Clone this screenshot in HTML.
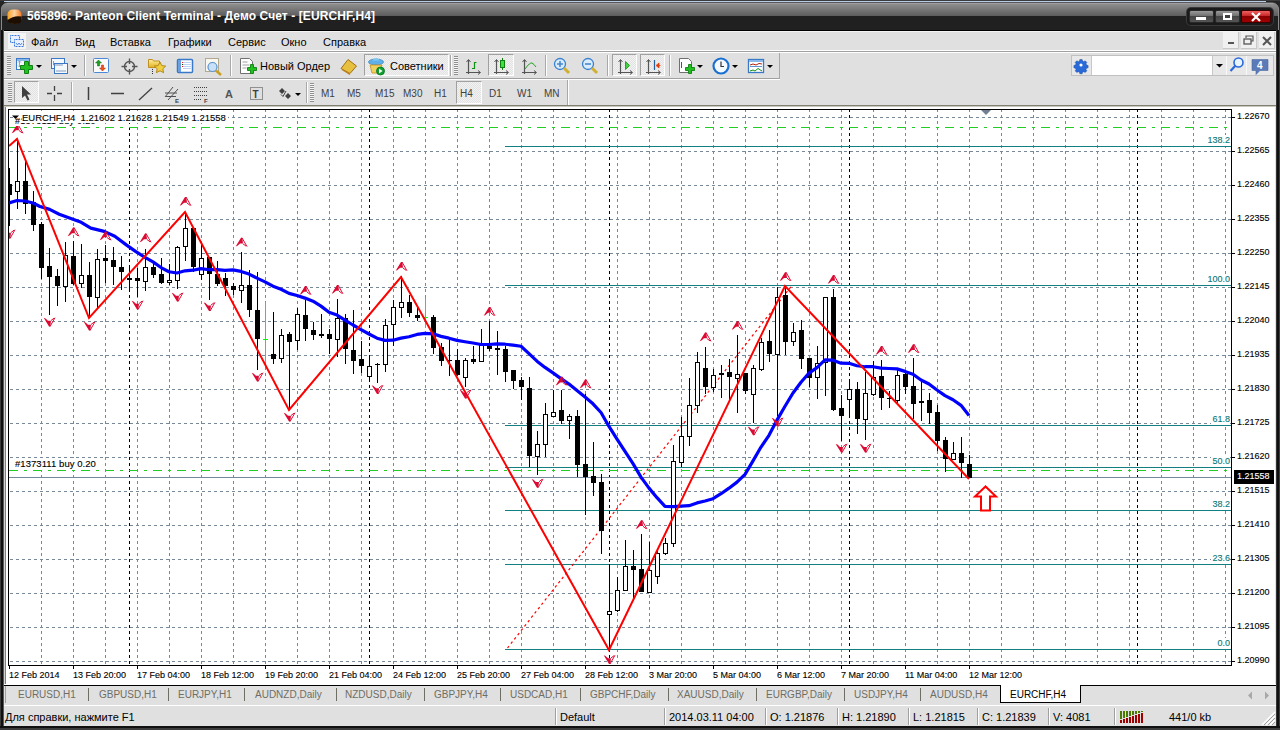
<!DOCTYPE html>
<html><head><meta charset="utf-8">
<style>
*{margin:0;padding:0;box-sizing:border-box}
html,body{width:1280px;height:730px;overflow:hidden;background:#e0e0e0;font-family:"Liberation Sans",sans-serif;font-size:11px;color:#000;position:relative}
.abs{position:absolute}
.t{position:absolute;white-space:nowrap;line-height:1}
.ct{position:absolute;white-space:nowrap;font-size:9px;line-height:11px;color:#000;-webkit-text-stroke:0.12px currentColor}
.fl{color:#087878;background:#fff;padding-left:1px}
#title{left:0;top:0;width:1280px;height:31px;background:linear-gradient(#3c3c3c 0,#3c3c3c 1px,#b8cce8 1px,#b8cce8 2px,#303030 2px,#303030 3px,#b4b4b4 3px,#b4b4b4 4px,#8e8e8e 4px,#5c5c5c 16px,#202020 16px,#202020 30px,#000 30px)}
#ttext{left:27px;top:10px;color:#fff;font-weight:bold;font-size:12px;letter-spacing:0.09px}
.mi{top:37px;font-size:11px}
.bar{position:absolute;left:4px;width:1272px}
.tb{position:absolute;font-size:11px;white-space:nowrap;line-height:1}
.tf{position:absolute;font-size:10px;color:#404040;line-height:1}
.press{position:absolute;border:1px solid #a0a0a0;border-right-color:#fff;border-bottom-color:#fff;background-color:#f2f2f2;background-image:linear-gradient(45deg,#e2e2e2 25%,transparent 25%,transparent 75%,#e2e2e2 75%),linear-gradient(45deg,#e2e2e2 25%,transparent 25%,transparent 75%,#e2e2e2 75%);background-size:2px 2px;background-position:0 0,1px 1px}
.sep{position:absolute;width:2px;border-left:1px solid #a8a8a8;border-right:1px solid #fff}
.grip{position:absolute;width:4px;background:repeating-linear-gradient(#909090 0,#909090 1px,#f4f4f4 1px,#f4f4f4 2px)}
.tab{position:absolute;top:690px;font-size:10px;color:#6e6e64;line-height:1;white-space:nowrap}
.tsep{position:absolute;top:688px;width:1px;height:13px;background:#6e6e64}
.st{position:absolute;top:712px;font-size:11px;line-height:1;white-space:nowrap}
.ss{position:absolute;top:708px;width:2px;height:17px;border-left:1px solid #a0a0a0;border-right:1px solid #fff}
</style></head><body>
<!-- title bar -->
<svg class="abs" style="left:0;top:0" width="1280" height="31">
<defs><linearGradient id="tg" gradientUnits="userSpaceOnUse" x1="0" y1="3" x2="0" y2="31"><stop offset="0" stop-color="#b4b4b4"/><stop offset="0.036" stop-color="#b4b4b4"/><stop offset="0.036" stop-color="#8e8e8e"/><stop offset="0.464" stop-color="#5c5c5c"/><stop offset="0.464" stop-color="#202020"/><stop offset="0.964" stop-color="#202020"/><stop offset="0.964" stop-color="#000"/><stop offset="1" stop-color="#000"/></linearGradient></defs>
<rect width="1280" height="31" fill="#262626"/>
<rect x="0" y="0" width="1280" height="1" fill="#3c3c3c"/>
<rect x="4" y="1" width="1262" height="1" fill="#b8cce8"/>
<rect x="1.5" y="3" width="1277" height="40" rx="6" ry="6" fill="url(#tg)" stroke="#8a8a8a" stroke-width="1"/>
<rect x="0" y="30" width="1280" height="1" fill="#000"/>
</svg>
<svg class="abs" style="left:7px;top:9px" width="16" height="16"><defs><linearGradient id="og" x1="0" y1="0" x2="1" y2="0"><stop offset="0" stop-color="#f8a020"/><stop offset="0.5" stop-color="#ffd0a0"/><stop offset="1" stop-color="#f07a20"/></linearGradient></defs><rect x="0.5" y="0.5" width="14" height="14" rx="5" fill="url(#og)"/><path d="M0.5 11Q7 6 14.5 7.5V11Q14.5 15 8 15Q0.5 15 0.5 11Z" fill="#1e0e00"/></svg>
<div id="ttext" class="t">565896: Panteon Client Terminal - Демо Счет - [EURCHF,H4]</div>
<!-- window buttons -->
<div class="abs" style="left:1187px;top:8px;width:86px;height:17px;border-radius:4px;background:#1a1a1a;box-shadow:0 0 0 1px #3a3a3a"></div>
<div class="abs" style="left:1189px;top:10px;width:25px;height:13px;border:1px solid #2a2a2a;border-radius:2px;background:linear-gradient(#9a9a9a,#6a6a6a 50%,#454545 50%,#555)"></div>
<div class="abs" style="left:1206px-0px;left:1196px;top:17px;width:10px;height:3px;background:#fff"></div>
<div class="abs" style="left:1215px;top:10px;width:25px;height:13px;border:1px solid #2a2a2a;border-radius:2px;background:linear-gradient(#9a9a9a,#6a6a6a 50%,#454545 50%,#555)"></div>
<div class="abs" style="left:1223px;top:13px;width:9px;height:7px;border:2px solid #fff;border-top-width:2px;background:#404040"></div>
<div class="abs" style="left:1241px;top:10px;width:30px;height:13px;border:1px solid #3a0000;border-radius:2px;background:linear-gradient(#f06060,#c02020 50%,#8a0000 50%,#a00000)"></div>
<svg class="abs" style="left:1250px;top:12px" width="12" height="10"><path d="M2 1L10 9M10 1L2 9" stroke="#fff" stroke-width="2.2"/></svg>
<!-- frame borders -->
<div class="abs" style="left:0;top:30px;width:4px;height:700px;background:linear-gradient(90deg,#3c3c3c 0,#3c3c3c 1px,#101010 1px,#101010 3px,#5a5a5a 3px)"></div>
<div class="abs" style="left:1276px;top:30px;width:4px;height:700px;background:linear-gradient(90deg,#5a5a5a 0,#101010 1px,#101010 3px,#3c3c3c 3px)"></div>
<div class="abs" style="left:0;top:726px;width:1280px;height:4px;background:linear-gradient(#101010 0,#101010 2px,#3c3c3c 2px)"></div>
<!-- menu bar -->
<div class="bar" style="top:30px;height:1px;background:#000"></div>
<div class="bar" style="top:31px;height:1px;background:#f4f4f4"></div>
<svg class="abs" style="left:8px;top:33px" width="18" height="16"><rect x="0" y="0" width="18" height="16" fill="#f4f4f4"/><rect x="2.5" y="2.5" width="9" height="7" fill="#e8f0ff" stroke="#3a78d8" stroke-dasharray="1 0.5"/><rect x="6.5" y="6.5" width="9" height="7" fill="#e8f0ff" stroke="#3a78d8" stroke-dasharray="1 0.5"/><path d="M8 10l1.5 2 1.5-2 1.5 2 1.5-2" stroke="#3a78d8" fill="none" stroke-width="0.8"/></svg>
<div class="t mi" style="left:31px">Файл</div>
<div class="t mi" style="left:75px">Вид</div>
<div class="t mi" style="left:110px">Вставка</div>
<div class="t mi" style="left:168px">Графики</div>
<div class="t mi" style="left:228px">Сервис</div>
<div class="t mi" style="left:281px">Окно</div>
<div class="t mi" style="left:323px">Справка</div>
<!-- mdi buttons -->
<div class="abs" style="left:1223px;top:32px;width:16px;height:17px;background:#f0f0f0;border-right:1px solid #c8c8c8;border-bottom:1px solid #c8c8c8"></div>
<div class="abs" style="left:1228px;top:42px;width:6px;height:2px;background:#555"></div>
<div class="abs" style="left:1241px;top:32px;width:16px;height:17px;background:#f0f0f0;border-right:1px solid #c8c8c8;border-bottom:1px solid #c8c8c8"></div>
<svg class="abs" style="left:1243px;top:35px" width="12" height="10"><rect x="1" y="4" width="7" height="5" fill="none" stroke="#555" stroke-width="1.3"/><path d="M3 3V1H10V6H8" fill="none" stroke="#555" stroke-width="1.2"/></svg>
<div class="abs" style="left:1259px;top:32px;width:16px;height:17px;background:#f0f0f0;border-right:1px solid #c8c8c8;border-bottom:1px solid #c8c8c8"></div>
<svg class="abs" style="left:1262px;top:36px" width="10" height="10"><path d="M1 1L9 9M9 1L1 9" stroke="#555" stroke-width="2"/></svg>
<div class="bar" style="top:50px;height:1px;background:#fff"></div>
<div class="bar" style="top:51px;height:1px;background:#a0a0a0"></div>
<div class="bar" style="top:52px;height:1px;background:#fff"></div>
<!-- toolbar 1 -->
<div class="abs" style="left:4px;top:78px;width:776px;height:1px;background:#a0a0a0"></div>
<div class="abs" style="left:779px;top:53px;width:1px;height:26px;background:#a8a8a8"></div>
<div class="abs" style="left:4px;top:79px;width:776px;height:1px;background:#fff"></div>
<div class="grip" style="left:7px;top:56px;height:19px"></div>
<svg class="abs" style="left:0;top:50px;z-index:2" width="800" height="30">
<defs>
<linearGradient id="gp" x1="0" y1="0" x2="0" y2="1"><stop offset="0" stop-color="#80f080"/><stop offset="1" stop-color="#10b010"/></linearGradient>
<linearGradient id="gy" x1="0" y1="0" x2="0" y2="1"><stop offset="0" stop-color="#fff0a0"/><stop offset="1" stop-color="#e0b020"/></linearGradient>
<linearGradient id="gb" x1="0" y1="0" x2="0" y2="1"><stop offset="0" stop-color="#e8f4ff"/><stop offset="1" stop-color="#a8d0f0"/></linearGradient>
</defs>
<!-- 1 new chart -->
<rect x="16.5" y="8.5" width="13" height="11" fill="#f4f8ff" stroke="#3a78c8"/>
<rect x="17" y="9" width="12" height="2" fill="#8ab8e8"/>
<path d="M19.5 11V17M18 12.5L19.5 11L21 12.5M18 15.5L19.5 17L21 15.5" stroke="#7890b0" fill="none" stroke-width="0.8"/>
<path d="M24.5 11.5h4v4h4v4h-4v4h-4v-4h-4v-4h4z" fill="#20c020" stroke="#108010" stroke-width="1"/>
<path d="M36 15h6l-3 3z" fill="#000"/>
<!-- 2 profiles -->
<rect x="51.5" y="8.5" width="13" height="10" fill="#f4f8ff" stroke="#3a78c8"/>
<rect x="54.5" y="13.5" width="13" height="10" fill="#f4f8ff" stroke="#3a78c8"/>
<path d="M53.5 11V15H63M56 21H66" stroke="#7890b0" fill="none" stroke-width="0.9"/>
<path d="M71 15h6l-3 3z" fill="#000"/>
<!-- 3 market watch -->
<rect x="93.5" y="8.5" width="15" height="14" fill="#fafafa" stroke="#4a88d8" rx="1"/>
<path d="M98.5 10L95.5 13H97.5V16H99.5V13H101.5Z" fill="#20a020" stroke="#106010" stroke-width="0.5"/>
<path d="M102.5 21L99.5 18H101.5V15H103.5V18H105.5Z" fill="#f05020" stroke="#a03010" stroke-width="0.5"/>
<!-- 4 crosshair -->
<circle cx="129.5" cy="16.5" r="5" fill="none" stroke="#555" stroke-width="1.4"/>
<path d="M129.5 8.5V14M129.5 19V24.5M121.5 16.5H127M132 16.5H137.5" stroke="#555" stroke-width="1.4"/>
<!-- 5 folder star -->
<path d="M148.5 9.5h4l1 1.5h6v6.5h-11z" fill="url(#gy)" stroke="#c09020"/>
<path d="M160 12l1.8 3.6 3.9.5-2.9 2.7.8 3.9-3.6-1.9-3.6 1.9.8-3.9-2.9-2.7 3.9-.5z" fill="#f0d040" stroke="#b08010" stroke-width="0.9"/>
<path d="M152.5 19v5" stroke="#333" stroke-dasharray="1 1"/>
<!-- 6 navigator -->
<rect x="177.5" y="9.5" width="15" height="13" fill="#fff" stroke="#3a78c8" stroke-width="1.5" rx="1"/>
<rect x="178" y="10" width="3" height="12" fill="#6aa0e0"/>
<path d="M183 12.5H191M183 14.5H191M183 16.5H191M183 18.5H191" stroke="#a8c8f0" stroke-width="0.8"/>
<path d="M182 12.5h1M182 16.5h1" stroke="#e02020"/><path d="M182 14.5h1" stroke="#204020"/>
<!-- 7 terminal -->
<rect x="205.5" y="8.5" width="13" height="13" fill="#f8f8f0" stroke="#b0a890"/>
<circle cx="212.5" cy="17" r="4.5" fill="#c8e0f8" stroke="#5a90d0" stroke-width="1.2"/>
<path d="M216 20.5L221 25" stroke="#c8a020" stroke-width="2.5"/>
<!-- 8 new order doc -->
<path d="M240.5 8.5h9l3 3v12h-12z" fill="#fff" stroke="#707070"/>
<path d="M242.5 12h5M242.5 15h7M242.5 18h4" stroke="#a0a0a0"/>
<path d="M247.5 17.5h3v-3h3v3h3v3h-3v3h-3v-3h-3z" fill="#20c020" stroke="#108010" stroke-width="0.9"/>
<!-- 9 book -->
<path d="M341 18.5L348 9.5L356.5 16L350 23.5Z" fill="#e8c040" stroke="#a07010"/>
<path d="M342 19.5L350 24.5" stroke="#c08020" stroke-width="1.2"/>
<!-- 10 expert -->
<ellipse cx="376" cy="12" rx="7.5" ry="3" fill="#60b0e8" stroke="#3080c0" stroke-width="0.7"/>
<path d="M372 10.5Q376 5.5 380 10.5Z" fill="#80c8f0"/>
<path d="M370 15h12l-2 8h-8z" fill="#f0d060" stroke="#c09020" stroke-width="0.8"/>
<circle cx="380.5" cy="21" r="4" fill="#10a030" stroke="#087020" stroke-width="0.8"/>
<path d="M379 18.5v5l3.5-2.5z" fill="#fff"/>
<!-- 11 bar chart -->
<path d="M468.5 10V24M466 22.5H480" stroke="#555" stroke-width="1.2"/>
<path d="M466.5 12L468.5 9.5L470.5 12M478 20.5L480.5 22.5L478 24.5" stroke="#555" fill="none" stroke-width="1"/>
<path d="M474.5 12V19M474.5 12.5H476.5M474.5 18.5H472" stroke="#109010" stroke-width="1.2"/>
<!-- 12 candle (pressed) -->
<path d="M496.5 10V24M494 22.5H508" stroke="#555" stroke-width="1.2"/>
<path d="M494.5 12L496.5 9.5L498.5 12M506 20.5L508.5 22.5L506 24.5" stroke="#555" fill="none" stroke-width="1"/>
<path d="M502.5 8V20" stroke="#108010"/>
<rect x="500.5" y="10.5" width="4" height="7" fill="#40e040" stroke="#108010"/>
<!-- 13 line chart -->
<path d="M524.5 10V24M522 22.5H536" stroke="#555" stroke-width="1.2"/>
<path d="M522.5 12L524.5 9.5L526.5 12M534 20.5L536.5 22.5L534 24.5" stroke="#555" fill="none" stroke-width="1"/>
<path d="M525 19Q530 12 532 13Q534 14 536 17" stroke="#20a020" fill="none" stroke-width="1"/>
<!-- 14 zoom in -->
<circle cx="560" cy="14" r="5.5" fill="#d8ecfc" stroke="#3a80d0" stroke-width="1.3"/>
<path d="M557 14h6M560 11v6" stroke="#4a88c8" stroke-width="1.6"/>
<path d="M564 18L569 23" stroke="#d0b030" stroke-width="3"/>
<!-- 15 zoom out -->
<circle cx="588" cy="14" r="5.5" fill="#d8ecfc" stroke="#3a80d0" stroke-width="1.3"/>
<path d="M585 14h6" stroke="#4a88c8" stroke-width="1.6"/>
<path d="M592 18L597 23" stroke="#d0b030" stroke-width="3"/>
<!-- 16 autoscroll -->
<path d="M620.5 10V24M618 22.5H632" stroke="#555" stroke-width="1.2"/>
<path d="M618.5 12L620.5 9.5L622.5 12M630 20.5L632.5 22.5L630 24.5" stroke="#555" fill="none" stroke-width="1"/>
<path d="M625.5 11.5V19.5L629.5 15.5Z" fill="#40d040" stroke="#109010" stroke-width="0.8"/>
<!-- 17 chart shift -->
<path d="M648.5 10V24M646 22.5H660" stroke="#555" stroke-width="1.2"/>
<path d="M646.5 12L648.5 9.5L650.5 12M658 20.5L660.5 22.5L658 24.5" stroke="#555" fill="none" stroke-width="1"/>
<path d="M654.5 10V20" stroke="#2060a0" stroke-width="1.2"/>
<path d="M656 15.5L659 13V18Z M658 15.5H660.5" fill="#e04010" stroke="#e04010" stroke-width="0.8"/>
<!-- 18 templates -->
<path d="M679.5 8.5h9l3 3v11h-12z" fill="#fff" stroke="#707070"/>
<path d="M681.5 12v6" stroke="#555"/>
<path d="M685.5 17.5h3v-3h3v3h3v3h-3v3h-3v-3h-3z" fill="#20c020" stroke="#108010" stroke-width="0.9"/>
<path d="M697 15h6l-3 3z" fill="#000"/>
<!-- 19 clock -->
<circle cx="721" cy="16" r="7.5" fill="#f4f8ff" stroke="#1a70d0" stroke-width="2.2"/>
<path d="M721 11.5V16.5H724" stroke="#333" stroke-width="1.2" fill="none"/>
<path d="M732 15h6l-3 3z" fill="#000"/>
<!-- 20 indicators window -->
<rect x="748.5" y="9.5" width="15" height="13" fill="#fff" stroke="#3a78c8" stroke-width="1.3"/>
<rect x="749" y="10" width="14" height="2" fill="#8ab8e8"/>
<path d="M750 16.5H762" stroke="#3a78c8" stroke-width="0.8"/>
<path d="M750 15L753 14L756 15L759 13.5L762 14" stroke="#b02010" fill="none" stroke-width="1"/>
<path d="M750 21L753 20L755 21L758 18.5L762 21" stroke="#109010" fill="none" stroke-width="1"/>
<path d="M767 15h6l-3 3z" fill="#000"/>
</svg>
<svg class="abs" style="left:1060px;top:50px;z-index:2" width="220" height="30">
<!-- gear -->
<g transform="translate(21 15) scale(0.78)">
<path d="M-1.5 -7h3l.5 2 1.6.7 1.8-1.1 2.1 2.1-1.1 1.8.7 1.6 2 .5v3l-2 .5-.7 1.6 1.1 1.8-2.1 2.1-1.8-1.1-1.6.7-.5 2h-3l-.5-2-1.6-.7-1.8 1.1-2.1-2.1 1.1-1.8-.7-1.6-2-.5v-3l2-.5.7-1.6-1.1-1.8 2.1-2.1 1.8 1.1 1.6-.7z" fill="#2a6ad8" stroke="#1a4aa0" stroke-width="0.6"/>
<circle r="2" fill="#fff"/>
</g>
<path d="M156 14h7l-3.5 3.5z" fill="#000"/>
<circle cx="178.5" cy="12.5" r="4.5" fill="#eaf4ff" stroke="#2a6ad8" stroke-width="1.6"/>
<path d="M175.5 15.5L170.5 21" stroke="#2a6ad8" stroke-width="2.2"/>
<path d="M192 9.5h16v11h-8l-4 4v-4h-4z" fill="#5a7ab8" stroke="#4a6aa0" stroke-width="0.6"/>
<text x="197" y="19" font-family="Liberation Sans" font-weight="bold" font-size="10" fill="#fff">4</text>
</svg>

<div class="sep" style="left:84px;top:55px;height:21px"></div>
<div class="sep" style="left:230px;top:55px;height:21px"></div>
<div class="tb" style="left:260px;top:61px">Новый Ордер</div>
<div class="press" style="left:364px;top:54px;width:85px;height:22px"></div>
<div class="tb" style="left:390px;top:61px">Советники</div>
<div class="sep" style="left:450px;top:55px;height:21px"></div>
<div class="grip" style="left:454px;top:56px;height:19px"></div>
<div class="press" style="left:488px;top:54px;width:26px;height:22px"></div>
<div class="sep" style="left:545px;top:55px;height:21px"></div>
<div class="sep" style="left:607px;top:55px;height:21px"></div>
<div class="press" style="left:612px;top:54px;width:25px;height:22px"></div>
<div class="press" style="left:640px;top:54px;width:25px;height:22px"></div>
<div class="sep" style="left:669px;top:55px;height:21px"></div>
<!-- search widget -->
<div class="abs" style="left:1071px;top:55px;width:203px;height:21px;border:1px solid #c0c0c0;background:#e8e8e8"></div>
<div class="abs" style="left:1091px;top:56px;width:122px;height:19px;background:#fff;border-left:1px solid #c8c8c8;border-right:1px solid #c8c8c8"></div>
<div class="abs" style="left:1226px;top:56px;width:1px;height:19px;background:#f8f8f8"></div>
<div class="abs" style="left:1246px;top:56px;width:1px;height:19px;background:#f8f8f8"></div>
<!-- toolbar 2 -->
<div class="abs" style="left:4px;top:105px;width:1272px;height:1px;background:#808070"></div>
<div class="abs" style="left:4px;top:106px;width:1272px;height:1px;background:#c8c8c0"></div>
<div class="grip" style="left:8px;top:83px;height:19px"></div>
<div class="press" style="left:14px;top:81px;width:25px;height:22px"></div>
<div class="sep" style="left:71px;top:82px;height:21px"></div>
<div class="sep" style="left:306px;top:82px;height:21px"></div>
<div class="grip" style="left:310px;top:83px;height:19px"></div>
<div class="press" style="left:456px;top:81px;width:26px;height:23px"></div>
<div class="tf" style="left:321px;top:89px">M1</div>
<div class="tf" style="left:347px;top:89px">M5</div>
<div class="tf" style="left:375px;top:89px">M15</div>
<div class="tf" style="left:403px;top:89px">M30</div>
<div class="tf" style="left:434px;top:89px">H1</div>
<div class="tf" style="left:460px;top:89px">H4</div>
<div class="tf" style="left:489px;top:89px">D1</div>
<div class="tf" style="left:517px;top:89px">W1</div>
<div class="tf" style="left:544px;top:89px">MN</div>
<div class="sep" style="left:567px;top:80px;height:25px"></div>
<svg class="abs" style="left:0;top:78px;z-index:2" width="310" height="28">
<path d="M22 8V20L25 17.5L27.5 22.5L29.5 21.5L27 16.5H31Z" fill="#404040"/>
<path d="M54.5 8V13M54.5 17V23M47 15.5H52M57 15.5H62" stroke="#404040" stroke-width="1.3"/>
<path d="M88.5 9V22" stroke="#404040" stroke-width="1.5"/>
<path d="M111 15.5H124" stroke="#404040" stroke-width="1.5"/>
<path d="M139 22L152 10" stroke="#404040" stroke-width="1.3"/>
<path d="M165 19L173 9M168 22L178 11M165 15H177M166 18.5H176" stroke="#505050" stroke-width="1" fill="none"/>
<text x="175" y="25" font-family="Liberation Sans" font-weight="bold" font-size="6" fill="#404040">E</text>
<path d="M194 9.5H207M194 13.5H207M194 17.5H207M194 21.5H202" stroke="#404040" stroke-dasharray="1 1" fill="none"/>
<text x="204" y="25" font-family="Liberation Sans" font-weight="bold" font-size="6" fill="#404040">F</text>
<text x="225" y="20" font-family="Liberation Sans" font-weight="bold" font-size="11" fill="#555">A</text>
<rect x="250.5" y="9.5" width="12" height="12" fill="none" stroke="#404040" stroke-dasharray="1 1"/>
<text x="252.5" y="20" font-family="Liberation Sans" font-weight="bold" font-size="10" fill="#404040">T</text>
<path d="M279 13L282 10L285 13L282 16Z M285 18L288 15L291 18L288 21Z" fill="#404040"/>
<path d="M281 16.5L283 18.5L286 13" stroke="#404040" fill="none"/>
<path d="M295 15h6l-3 3z" fill="#000"/>
</svg>

<!-- chart -->
<div class="abs" style="left:4px;top:107px;width:1px;height:578px;background:#d4d4d4"></div><div class="abs" style="left:5px;top:107px;width:1px;height:578px;background:#808070"></div>
<svg class="abs" style="left:0;top:0" width="1280" height="730">
<defs><clipPath id="cp"><rect x="9" y="110" width="1222" height="555"/></clipPath></defs>
<rect x="6" y="107" width="1269" height="577" fill="#fff"/>
<g clip-path="url(#cp)" shape-rendering="crispEdges">
<path d="M10 117.5H1231M10 151.5H1231M10 185.5H1231M10 219.5H1231M10 253.5H1231M10 287.5H1231M10 321.5H1231M10 355.5H1231M10 389.5H1231M10 423.5H1231M10 457.5H1231M10 491.5H1231M10 525.5H1231M10 559.5H1231M10 593.5H1231M10 627.5H1231M10 661.5H1231" stroke="#778899" stroke-width="1" stroke-dasharray="3 3" fill="none"/>
<path d="M41.5 109V665M73.5 109V665M105.5 109V665M137.5 109V665M169.5 109V665M201.5 109V665M233.5 109V665M265.5 109V665M297.5 109V665M329.5 109V665M361.5 109V665M393.5 109V665M425.5 109V665M457.5 109V665M489.5 109V665M521.5 109V665M553.5 109V665M585.5 109V665M617.5 109V665M649.5 109V665M681.5 109V665M713.5 109V665M745.5 109V665M777.5 109V665M809.5 109V665M841.5 109V665M873.5 109V665M905.5 109V665M937.5 109V665M969.5 109V665M1001.5 109V665M1033.5 109V665M1065.5 109V665M1097.5 109V665M1129.5 109V665M1161.5 109V665M1193.5 109V665M1225.5 109V665" stroke="#778899" stroke-width="1" stroke-dasharray="3 3" fill="none"/>
<path d="M129.5 109V665M369.5 109V665M609.5 109V665M849.5 109V665M1137.5 109V665" stroke="#000" stroke-width="1" stroke-dasharray="3 3" fill="none"/>
</g>
<g clip-path="url(#cp)">
<path d="M505 146.5H1231" stroke="#128080" stroke-width="1" fill="none" shape-rendering="crispEdges"/>
<path d="M505 285.5H1231" stroke="#128080" stroke-width="1" fill="none" shape-rendering="crispEdges"/>
<path d="M505 425.5H1231" stroke="#128080" stroke-width="1" fill="none" shape-rendering="crispEdges"/>
<path d="M505 467.5H1231" stroke="#128080" stroke-width="1" fill="none" shape-rendering="crispEdges"/>
<path d="M505 510.5H1231" stroke="#128080" stroke-width="1" fill="none" shape-rendering="crispEdges"/>
<path d="M505 564.5H1231" stroke="#128080" stroke-width="1" fill="none" shape-rendering="crispEdges"/>
<path d="M505 649.5H1231" stroke="#128080" stroke-width="1" fill="none" shape-rendering="crispEdges"/>
<path d="M9 127.5H1231" stroke="#22cc22" stroke-width="1" stroke-dasharray="9 6 3 6" fill="none" shape-rendering="crispEdges"/>
<path d="M9 470.5H1231" stroke="#22cc22" stroke-width="1" stroke-dasharray="9 6 3 6" fill="none" shape-rendering="crispEdges"/>
<path d="M9 477.5H1231" stroke="#778899" stroke-width="1" fill="none" shape-rendering="crispEdges"/>
<path d="M507.5 648L791.5 286" stroke="#ff0000" stroke-width="1.2" stroke-dasharray="2.5 3" fill="none"/>
</g>
<g clip-path="url(#cp)" shape-rendering="crispEdges">
<path d="M9.5 168V226M17.5 139V209M25.5 159V214M33.5 191V231M41.5 222V279M49.5 248V315M57.5 269V306M65.5 242V302M73.5 241V285M81.5 244V288M89.5 262V318M97.5 249V308M105.5 245V283M113.5 247V285M121.5 256V290M129.5 265V292M137.5 268V297M145.5 249V291M153.5 263V278M161.5 258V284M169.5 264V285M177.5 246V289M185.5 212V261M193.5 228V272M201.5 243V280M209.5 257V300M217.5 261V286M225.5 273V296M233.5 283V295M241.5 252V303M249.5 270V317M257.5 272V370M273.5 312V364M281.5 329V363M289.5 332V410M297.5 308V350M305.5 300V341M313.5 322V340M321.5 314V338M329.5 329V354M337.5 299V357M345.5 314V364M353.5 310V374M361.5 341V373M369.5 355V382M377.5 363V383M385.5 319V372M393.5 300V346M401.5 276V318M409.5 295V317M417.5 307V321M433.5 315V354M441.5 343V366M449.5 339V376M457.5 349V376M465.5 358V387M473.5 346V364M481.5 329V361M489.5 321V351M497.5 331V375M505.5 346V382M513.5 370V389M521.5 377V400M529.5 377V467M537.5 431V475M545.5 403V457M553.5 390V416M561.5 390V424M569.5 414V439M577.5 410V477M585.5 394V515M593.5 442V496M601.5 474V554M609.5 564V650M617.5 577V612M625.5 540V590M633.5 550V600M641.5 534V592M649.5 542V592M657.5 549V584M665.5 538V555M673.5 445V547M681.5 417V467M689.5 378V446M697.5 352V413M705.5 347V394M713.5 369V392M721.5 365V398M729.5 359V401M737.5 335V413M745.5 373V394M753.5 365V423M761.5 338V371M769.5 330V362M777.5 287V416M785.5 286V355M793.5 323V346M801.5 320V369M809.5 358V387M817.5 346V399M825.5 297V396M833.5 289V411M841.5 395V441M849.5 379V417M857.5 382V434M865.5 372V440M873.5 361V396M881.5 360V410M889.5 391V408M897.5 370V403M905.5 373V394M913.5 358V419M921.5 380V421M929.5 393V424M937.5 405V451M945.5 437V472M953.5 442V460M961.5 437V478M969.5 455V478" stroke="#000" stroke-width="1" fill="none"/>
<path d="M265.5 302V363M263 339.5H268M425.5 298V328M423 317.5H428" stroke="#00ff00" stroke-width="1" fill="none"/>
<g fill="#000"><rect x="7" y="184" width="5" height="11"/><rect x="23" y="181" width="5" height="23"/><rect x="31" y="202" width="5" height="23"/><rect x="39" y="224" width="5" height="44"/><rect x="47" y="266" width="5" height="11"/><rect x="55" y="276" width="5" height="10"/><rect x="71" y="256" width="5" height="28"/><rect x="87" y="275" width="5" height="22"/><rect x="103" y="258" width="5" height="3"/><rect x="111" y="260" width="5" height="7"/><rect x="119" y="267" width="5" height="5"/><rect x="127" y="278" width="5" height="2"/><rect x="135" y="278" width="5" height="3"/><rect x="151" y="267" width="5" height="8"/><rect x="159" y="274" width="5" height="9"/><rect x="191" y="228" width="5" height="39"/><rect x="207" y="257" width="5" height="17"/><rect x="215" y="274" width="5" height="10"/><rect x="223" y="278" width="5" height="8"/><rect x="231" y="286" width="5" height="4"/><rect x="247" y="285" width="5" height="25"/><rect x="255" y="310" width="5" height="29"/><rect x="271" y="354" width="5" height="5"/><rect x="287" y="334" width="5" height="8"/><rect x="303" y="315" width="5" height="14"/><rect x="311" y="330" width="5" height="5"/><rect x="319" y="334" width="5" height="2"/><rect x="327" y="334" width="5" height="5"/><rect x="343" y="318" width="5" height="31"/><rect x="351" y="350" width="5" height="11"/><rect x="359" y="359" width="5" height="7"/><rect x="375" y="364" width="5" height="1"/><rect x="407" y="302" width="5" height="11"/><rect x="415" y="315" width="5" height="3"/><rect x="431" y="317" width="5" height="31"/><rect x="439" y="347" width="5" height="14"/><rect x="447" y="360" width="5" height="1"/><rect x="455" y="360" width="5" height="15"/><rect x="471" y="359" width="5" height="3"/><rect x="487" y="346" width="5" height="3"/><rect x="495" y="348" width="5" height="2"/><rect x="503" y="349" width="5" height="23"/><rect x="511" y="370" width="5" height="11"/><rect x="519" y="380" width="5" height="7"/><rect x="527" y="388" width="5" height="68"/><rect x="559" y="410" width="5" height="11"/><rect x="575" y="416" width="5" height="49"/><rect x="583" y="464" width="5" height="13"/><rect x="591" y="476" width="5" height="7"/><rect x="599" y="482" width="5" height="49"/><rect x="631" y="566" width="5" height="4"/><rect x="639" y="569" width="5" height="23"/><rect x="703" y="368" width="5" height="19"/><rect x="719" y="373" width="5" height="2"/><rect x="727" y="372" width="5" height="5"/><rect x="743" y="373" width="5" height="18"/><rect x="767" y="341" width="5" height="13"/><rect x="783" y="295" width="5" height="47"/><rect x="799" y="330" width="5" height="29"/><rect x="807" y="358" width="5" height="20"/><rect x="831" y="297" width="5" height="113"/><rect x="839" y="408" width="5" height="8"/><rect x="855" y="389" width="5" height="30"/><rect x="879" y="376" width="5" height="22"/><rect x="887" y="398" width="5" height="1"/><rect x="903" y="374" width="5" height="13"/><rect x="911" y="386" width="5" height="18"/><rect x="919" y="401" width="5" height="2"/><rect x="927" y="400" width="5" height="13"/><rect x="935" y="412" width="5" height="29"/><rect x="943" y="440" width="5" height="19"/><rect x="959" y="453" width="5" height="10"/><rect x="967" y="464" width="5" height="14"/></g>
<g fill="#fff" stroke="#000" stroke-width="1"><rect x="15.5" y="181.5" width="4" height="10"/><rect x="63.5" y="255.5" width="4" height="31"/><rect x="79.5" y="275.5" width="4" height="8"/><rect x="95.5" y="259.5" width="4" height="38"/><rect x="143.5" y="267.5" width="4" height="14"/><rect x="167.5" y="280.5" width="4" height="2"/><rect x="175.5" y="247.5" width="4" height="33"/><rect x="183.5" y="228.5" width="4" height="18"/><rect x="199.5" y="258.5" width="4" height="16"/><rect x="239.5" y="285.5" width="4" height="5"/><rect x="279.5" y="335.5" width="4" height="23"/><rect x="295.5" y="314.5" width="4" height="26"/><rect x="335.5" y="318.5" width="4" height="21"/><rect x="367.5" y="366.5" width="4" height="10"/><rect x="383.5" y="325.5" width="4" height="39"/><rect x="391.5" y="307.5" width="4" height="17"/><rect x="399.5" y="302.5" width="4" height="5"/><rect x="463.5" y="360.5" width="4" height="17"/><rect x="479.5" y="345.5" width="4" height="16"/><rect x="535.5" y="444.5" width="4" height="12"/><rect x="543.5" y="414.5" width="4" height="30"/><rect x="551.5" y="412.5" width="4" height="4"/><rect x="567.5" y="416.5" width="4" height="4"/><rect x="607.5" y="611.5" width="4" height="3"/><rect x="615.5" y="590.5" width="4" height="20"/><rect x="623.5" y="566.5" width="4" height="24"/><rect x="647.5" y="570.5" width="4" height="22"/><rect x="655.5" y="553.5" width="4" height="23"/><rect x="663.5" y="543.5" width="4" height="10"/><rect x="671.5" y="461.5" width="4" height="82"/><rect x="679.5" y="436.5" width="4" height="26"/><rect x="687.5" y="405.5" width="4" height="31"/><rect x="695.5" y="362.5" width="4" height="43"/><rect x="711.5" y="375.5" width="4" height="12"/><rect x="735.5" y="374.5" width="4" height="4"/><rect x="751.5" y="368.5" width="4" height="26"/><rect x="759.5" y="342.5" width="4" height="27"/><rect x="775.5" y="297.5" width="4" height="57"/><rect x="791.5" y="332.5" width="4" height="9"/><rect x="815.5" y="363.5" width="4" height="14"/><rect x="823.5" y="297.5" width="4" height="65"/><rect x="847.5" y="389.5" width="4" height="10"/><rect x="863.5" y="393.5" width="4" height="26"/><rect x="871.5" y="377.5" width="4" height="17"/><rect x="895.5" y="375.5" width="4" height="25"/><rect x="951.5" y="453.5" width="4" height="6"/></g>
</g>
<g clip-path="url(#cp)">
<path d="M9 203 L17 200.5 L25 201 L33 203 L40 206.5 L49.6 209.4 L59.2 214.2 L73.6 219.4 L81.2 222.3 L90.8 228.1 L104.2 231.4 L114.8 236.2 L126.3 244.9 L135.9 251.6 L145 257.44 L153 261.89 L161 267.56 L169 271.78 L177 273.0 L185 270.78 L193 270.22 L201 268.67 L209 269.72 L217 269.72 L225 270.33 L233 269.94 L241 271.39 L249 274.11 L257 278.11 L265 281.83 L273 286.22 L281 289.22 L289 293.39 L297 295.56 L305 298.11 L313 301.17 L321 306.11 L329 312.28 L337 315.11 L345 320.17 L353 325.0 L361 329.56 L369 334.0 L377 338.17 L385 340.39 L393 340.22 L401 338.17 L409 336.72 L417 334.44 L425 333.44 L433 333.78 L441 336.39 L449 338.17 L457 340.39 L465 341.72 L473 343.0 L481 344.5 L489 344.5 L497 343.89 L505 344.22 L513 345.06 L521 346.28 L529 353.56 L537 361.17 L545 367.39 L553 372.89 L561 378.61 L569 384.11 L577 390.61 L585 397.06 L593 403.83 L601 412.5 L609 426.44 L617 439.11 L625 451.39 L633 463.67 L641 477.11 L649 488.11 L657 497.67 L665 506.33 L673 506.61 L681 506.17 L689 505.67 L697 502.89 L705 501.0 L713 498.72 L721 493.72 L729 488.17 L737 482.11 L745 474.33 L753 460.83 L761 447.06 L769 435.28 L777 420.11 L785 406.22 L793 393.0 L801 382.22 L809 373.06 L817 367.61 L825 359.89 L833 360.17 L841 363.17 L849 363.28 L857 365.72 L865 366.72 L873 366.72 L881 368.06 L889 368.5 L897 368.89 L905 371.39 L913 374.17 L921 380.06 L929 384.0 L937 390.06 L945 395.61 L953 399.78 L961 405.33 L969 415.39" stroke="#0000ff" stroke-width="3.2" fill="none" stroke-linejoin="round"/>
<path d="M9 146 L17 139 L89 318 L185 212 L289 410 L401 277 L609 650 L785 286 L969 479" stroke="#ff0000" stroke-width="2" fill="none"/>
<g><g transform="translate(17.5 129)"><path d="M-0.5 -4.5L-5.8 4.2L-4 3.5L-1.5 1.2L1.5 1.2L0.8 -4.5Z" fill="#dc0a32"/><path d="M0.5 -4.5L5.5 4.3M1.5 1.5L4.5 3.8" stroke="#dc0a32" stroke-width="1" fill="none"/></g><g transform="translate(73.5 232)"><path d="M-0.5 -4.5L-5.8 4.2L-4 3.5L-1.5 1.2L1.5 1.2L0.8 -4.5Z" fill="#dc0a32"/><path d="M0.5 -4.5L5.5 4.3M1.5 1.5L4.5 3.8" stroke="#dc0a32" stroke-width="1" fill="none"/></g><g transform="translate(105.5 236)"><path d="M-0.5 -4.5L-5.8 4.2L-4 3.5L-1.5 1.2L1.5 1.2L0.8 -4.5Z" fill="#dc0a32"/><path d="M0.5 -4.5L5.5 4.3M1.5 1.5L4.5 3.8" stroke="#dc0a32" stroke-width="1" fill="none"/></g><g transform="translate(145.5 238)"><path d="M-0.5 -4.5L-5.8 4.2L-4 3.5L-1.5 1.2L1.5 1.2L0.8 -4.5Z" fill="#dc0a32"/><path d="M0.5 -4.5L5.5 4.3M1.5 1.5L4.5 3.8" stroke="#dc0a32" stroke-width="1" fill="none"/></g><g transform="translate(185.5 201.5)"><path d="M-0.5 -4.5L-5.8 4.2L-4 3.5L-1.5 1.2L1.5 1.2L0.8 -4.5Z" fill="#dc0a32"/><path d="M0.5 -4.5L5.5 4.3M1.5 1.5L4.5 3.8" stroke="#dc0a32" stroke-width="1" fill="none"/></g><g transform="translate(241.5 242.3)"><path d="M-0.5 -4.5L-5.8 4.2L-4 3.5L-1.5 1.2L1.5 1.2L0.8 -4.5Z" fill="#dc0a32"/><path d="M0.5 -4.5L5.5 4.3M1.5 1.5L4.5 3.8" stroke="#dc0a32" stroke-width="1" fill="none"/></g><g transform="translate(305.5 290.5)"><path d="M-0.5 -4.5L-5.8 4.2L-4 3.5L-1.5 1.2L1.5 1.2L0.8 -4.5Z" fill="#dc0a32"/><path d="M0.5 -4.5L5.5 4.3M1.5 1.5L4.5 3.8" stroke="#dc0a32" stroke-width="1" fill="none"/></g><g transform="translate(337.5 289.6)"><path d="M-0.5 -4.5L-5.8 4.2L-4 3.5L-1.5 1.2L1.5 1.2L0.8 -4.5Z" fill="#dc0a32"/><path d="M0.5 -4.5L5.5 4.3M1.5 1.5L4.5 3.8" stroke="#dc0a32" stroke-width="1" fill="none"/></g><g transform="translate(401.5 266.5)"><path d="M-0.5 -4.5L-5.8 4.2L-4 3.5L-1.5 1.2L1.5 1.2L0.8 -4.5Z" fill="#dc0a32"/><path d="M0.5 -4.5L5.5 4.3M1.5 1.5L4.5 3.8" stroke="#dc0a32" stroke-width="1" fill="none"/></g><g transform="translate(489.5 311.6)"><path d="M-0.5 -4.5L-5.8 4.2L-4 3.5L-1.5 1.2L1.5 1.2L0.8 -4.5Z" fill="#dc0a32"/><path d="M0.5 -4.5L5.5 4.3M1.5 1.5L4.5 3.8" stroke="#dc0a32" stroke-width="1" fill="none"/></g><g transform="translate(561.5 381.2)"><path d="M-0.5 -4.5L-5.8 4.2L-4 3.5L-1.5 1.2L1.5 1.2L0.8 -4.5Z" fill="#dc0a32"/><path d="M0.5 -4.5L5.5 4.3M1.5 1.5L4.5 3.8" stroke="#dc0a32" stroke-width="1" fill="none"/></g><g transform="translate(585.5 384)"><path d="M-0.5 -4.5L-5.8 4.2L-4 3.5L-1.5 1.2L1.5 1.2L0.8 -4.5Z" fill="#dc0a32"/><path d="M0.5 -4.5L5.5 4.3M1.5 1.5L4.5 3.8" stroke="#dc0a32" stroke-width="1" fill="none"/></g><g transform="translate(641.5 524.8)"><path d="M-0.5 -4.5L-5.8 4.2L-4 3.5L-1.5 1.2L1.5 1.2L0.8 -4.5Z" fill="#dc0a32"/><path d="M0.5 -4.5L5.5 4.3M1.5 1.5L4.5 3.8" stroke="#dc0a32" stroke-width="1" fill="none"/></g><g transform="translate(705.5 337.1)"><path d="M-0.5 -4.5L-5.8 4.2L-4 3.5L-1.5 1.2L1.5 1.2L0.8 -4.5Z" fill="#dc0a32"/><path d="M0.5 -4.5L5.5 4.3M1.5 1.5L4.5 3.8" stroke="#dc0a32" stroke-width="1" fill="none"/></g><g transform="translate(737.5 325.6)"><path d="M-0.5 -4.5L-5.8 4.2L-4 3.5L-1.5 1.2L1.5 1.2L0.8 -4.5Z" fill="#dc0a32"/><path d="M0.5 -4.5L5.5 4.3M1.5 1.5L4.5 3.8" stroke="#dc0a32" stroke-width="1" fill="none"/></g><g transform="translate(785.5 276.7)"><path d="M-0.5 -4.5L-5.8 4.2L-4 3.5L-1.5 1.2L1.5 1.2L0.8 -4.5Z" fill="#dc0a32"/><path d="M0.5 -4.5L5.5 4.3M1.5 1.5L4.5 3.8" stroke="#dc0a32" stroke-width="1" fill="none"/></g><g transform="translate(833.5 279.6)"><path d="M-0.5 -4.5L-5.8 4.2L-4 3.5L-1.5 1.2L1.5 1.2L0.8 -4.5Z" fill="#dc0a32"/><path d="M0.5 -4.5L5.5 4.3M1.5 1.5L4.5 3.8" stroke="#dc0a32" stroke-width="1" fill="none"/></g><g transform="translate(881.5 350.6)"><path d="M-0.5 -4.5L-5.8 4.2L-4 3.5L-1.5 1.2L1.5 1.2L0.8 -4.5Z" fill="#dc0a32"/><path d="M0.5 -4.5L5.5 4.3M1.5 1.5L4.5 3.8" stroke="#dc0a32" stroke-width="1" fill="none"/></g><g transform="translate(913.5 348.7)"><path d="M-0.5 -4.5L-5.8 4.2L-4 3.5L-1.5 1.2L1.5 1.2L0.8 -4.5Z" fill="#dc0a32"/><path d="M0.5 -4.5L5.5 4.3M1.5 1.5L4.5 3.8" stroke="#dc0a32" stroke-width="1" fill="none"/></g><g transform="translate(9.5 234) scale(1 -1)"><path d="M-0.5 -4.5L-5.8 4.2L-4 3.5L-1.5 1.2L1.5 1.2L0.8 -4.5Z" fill="#dc0a32"/><path d="M0.5 -4.5L5.5 4.3M1.5 1.5L4.5 3.8" stroke="#dc0a32" stroke-width="1" fill="none"/></g><g transform="translate(49.5 322) scale(1 -1)"><path d="M-0.5 -4.5L-5.8 4.2L-4 3.5L-1.5 1.2L1.5 1.2L0.8 -4.5Z" fill="#dc0a32"/><path d="M0.5 -4.5L5.5 4.3M1.5 1.5L4.5 3.8" stroke="#dc0a32" stroke-width="1" fill="none"/></g><g transform="translate(89.5 326) scale(1 -1)"><path d="M-0.5 -4.5L-5.8 4.2L-4 3.5L-1.5 1.2L1.5 1.2L0.8 -4.5Z" fill="#dc0a32"/><path d="M0.5 -4.5L5.5 4.3M1.5 1.5L4.5 3.8" stroke="#dc0a32" stroke-width="1" fill="none"/></g><g transform="translate(137.5 305) scale(1 -1)"><path d="M-0.5 -4.5L-5.8 4.2L-4 3.5L-1.5 1.2L1.5 1.2L0.8 -4.5Z" fill="#dc0a32"/><path d="M0.5 -4.5L5.5 4.3M1.5 1.5L4.5 3.8" stroke="#dc0a32" stroke-width="1" fill="none"/></g><g transform="translate(177.5 297) scale(1 -1)"><path d="M-0.5 -4.5L-5.8 4.2L-4 3.5L-1.5 1.2L1.5 1.2L0.8 -4.5Z" fill="#dc0a32"/><path d="M0.5 -4.5L5.5 4.3M1.5 1.5L4.5 3.8" stroke="#dc0a32" stroke-width="1" fill="none"/></g><g transform="translate(209.5 306.6) scale(1 -1)"><path d="M-0.5 -4.5L-5.8 4.2L-4 3.5L-1.5 1.2L1.5 1.2L0.8 -4.5Z" fill="#dc0a32"/><path d="M0.5 -4.5L5.5 4.3M1.5 1.5L4.5 3.8" stroke="#dc0a32" stroke-width="1" fill="none"/></g><g transform="translate(257.5 377) scale(1 -1)"><path d="M-0.5 -4.5L-5.8 4.2L-4 3.5L-1.5 1.2L1.5 1.2L0.8 -4.5Z" fill="#dc0a32"/><path d="M0.5 -4.5L5.5 4.3M1.5 1.5L4.5 3.8" stroke="#dc0a32" stroke-width="1" fill="none"/></g><g transform="translate(289.5 417) scale(1 -1)"><path d="M-0.5 -4.5L-5.8 4.2L-4 3.5L-1.5 1.2L1.5 1.2L0.8 -4.5Z" fill="#dc0a32"/><path d="M0.5 -4.5L5.5 4.3M1.5 1.5L4.5 3.8" stroke="#dc0a32" stroke-width="1" fill="none"/></g><g transform="translate(377.5 389.4) scale(1 -1)"><path d="M-0.5 -4.5L-5.8 4.2L-4 3.5L-1.5 1.2L1.5 1.2L0.8 -4.5Z" fill="#dc0a32"/><path d="M0.5 -4.5L5.5 4.3M1.5 1.5L4.5 3.8" stroke="#dc0a32" stroke-width="1" fill="none"/></g><g transform="translate(465.5 394) scale(1 -1)"><path d="M-0.5 -4.5L-5.8 4.2L-4 3.5L-1.5 1.2L1.5 1.2L0.8 -4.5Z" fill="#dc0a32"/><path d="M0.5 -4.5L5.5 4.3M1.5 1.5L4.5 3.8" stroke="#dc0a32" stroke-width="1" fill="none"/></g><g transform="translate(537.5 483.2) scale(1 -1)"><path d="M-0.5 -4.5L-5.8 4.2L-4 3.5L-1.5 1.2L1.5 1.2L0.8 -4.5Z" fill="#dc0a32"/><path d="M0.5 -4.5L5.5 4.3M1.5 1.5L4.5 3.8" stroke="#dc0a32" stroke-width="1" fill="none"/></g><g transform="translate(609.5 659.5) scale(1 -1)"><path d="M-0.5 -4.5L-5.8 4.2L-4 3.5L-1.5 1.2L1.5 1.2L0.8 -4.5Z" fill="#dc0a32"/><path d="M0.5 -4.5L5.5 4.3M1.5 1.5L4.5 3.8" stroke="#dc0a32" stroke-width="1" fill="none"/></g><g transform="translate(753.5 430.7) scale(1 -1)"><path d="M-0.5 -4.5L-5.8 4.2L-4 3.5L-1.5 1.2L1.5 1.2L0.8 -4.5Z" fill="#dc0a32"/><path d="M0.5 -4.5L5.5 4.3M1.5 1.5L4.5 3.8" stroke="#dc0a32" stroke-width="1" fill="none"/></g><g transform="translate(777.5 422) scale(1 -1)"><path d="M-0.5 -4.5L-5.8 4.2L-4 3.5L-1.5 1.2L1.5 1.2L0.8 -4.5Z" fill="#dc0a32"/><path d="M0.5 -4.5L5.5 4.3M1.5 1.5L4.5 3.8" stroke="#dc0a32" stroke-width="1" fill="none"/></g><g transform="translate(841.5 448.1) scale(1 -1)"><path d="M-0.5 -4.5L-5.8 4.2L-4 3.5L-1.5 1.2L1.5 1.2L0.8 -4.5Z" fill="#dc0a32"/><path d="M0.5 -4.5L5.5 4.3M1.5 1.5L4.5 3.8" stroke="#dc0a32" stroke-width="1" fill="none"/></g><g transform="translate(865.5 448.1) scale(1 -1)"><path d="M-0.5 -4.5L-5.8 4.2L-4 3.5L-1.5 1.2L1.5 1.2L0.8 -4.5Z" fill="#dc0a32"/><path d="M0.5 -4.5L5.5 4.3M1.5 1.5L4.5 3.8" stroke="#dc0a32" stroke-width="1" fill="none"/></g></g>
<path d="M985.5 486.5L975 496.5H981V510.5H990V496.5H996Z" stroke="#ff0000" stroke-width="2" fill="#fff" stroke-linejoin="miter"/>
</g>
<rect x="8.5" y="109.5" width="1223" height="556" fill="none" stroke="#000" stroke-width="1" shape-rendering="crispEdges"/>
<path d="M1232 117.5H1235M1232 151.5H1235M1232 185.5H1235M1232 219.5H1235M1232 253.5H1235M1232 287.5H1235M1232 321.5H1235M1232 355.5H1235M1232 389.5H1235M1232 423.5H1235M1232 457.5H1235M1232 491.5H1235M1232 525.5H1235M1232 559.5H1235M1232 593.5H1235M1232 627.5H1235M1232 661.5H1235" stroke="#000" stroke-width="1" shape-rendering="crispEdges"/>
<path d="M9.5 666V669M73.5 666V669M137.5 666V669M201.5 666V669M265.5 666V669M329.5 666V669M393.5 666V669M457.5 666V669M521.5 666V669M585.5 666V669M649.5 666V669M713.5 666V669M777.5 666V669M841.5 666V669M905.5 666V669M969.5 666V669" stroke="#000" stroke-width="1" shape-rendering="crispEdges"/>
<path d="M981 110H991L986 115Z" fill="#708090"/>
</svg>
<div class="ct" style="left:1237px;top:111px;">1.22670</div>
<div class="ct" style="left:1237px;top:145px;">1.22565</div>
<div class="ct" style="left:1237px;top:179px;">1.22460</div>
<div class="ct" style="left:1237px;top:213px;">1.22355</div>
<div class="ct" style="left:1237px;top:247px;">1.22250</div>
<div class="ct" style="left:1237px;top:281px;">1.22145</div>
<div class="ct" style="left:1237px;top:315px;">1.22040</div>
<div class="ct" style="left:1237px;top:349px;">1.21935</div>
<div class="ct" style="left:1237px;top:383px;">1.21830</div>
<div class="ct" style="left:1237px;top:417px;">1.21725</div>
<div class="ct" style="left:1237px;top:451px;">1.21620</div>
<div class="ct" style="left:1237px;top:485px;">1.21515</div>
<div class="ct" style="left:1237px;top:519px;">1.21410</div>
<div class="ct" style="left:1237px;top:553px;">1.21305</div>
<div class="ct" style="left:1237px;top:587px;">1.21200</div>
<div class="ct" style="left:1237px;top:621px;">1.21095</div>
<div class="ct" style="left:1237px;top:655px;">1.20990</div>
<div class="ct" style="left:9px;top:670px;">12 Feb 2014</div>
<div class="ct" style="left:73px;top:670px;">13 Feb 20:00</div>
<div class="ct" style="left:137px;top:670px;">17 Feb 04:00</div>
<div class="ct" style="left:201px;top:670px;">18 Feb 12:00</div>
<div class="ct" style="left:265px;top:670px;">19 Feb 20:00</div>
<div class="ct" style="left:329px;top:670px;">21 Feb 04:00</div>
<div class="ct" style="left:393px;top:670px;">24 Feb 12:00</div>
<div class="ct" style="left:457px;top:670px;">25 Feb 20:00</div>
<div class="ct" style="left:521px;top:670px;">27 Feb 04:00</div>
<div class="ct" style="left:585px;top:670px;">28 Feb 12:00</div>
<div class="ct" style="left:649px;top:670px;">3 Mar 20:00</div>
<div class="ct" style="left:713px;top:670px;">5 Mar 04:00</div>
<div class="ct" style="left:777px;top:670px;">6 Mar 12:00</div>
<div class="ct" style="left:841px;top:670px;">7 Mar 20:00</div>
<div class="ct" style="left:905px;top:670px;">11 Mar 04:00</div>
<div class="ct" style="left:969px;top:670px;">12 Mar 12:00</div>
<div class="ct fl" style="right:50px;top:135px">138.2</div>
<div class="ct fl" style="right:50px;top:274px">100.0</div>
<div class="ct fl" style="right:50px;top:414px">61.8</div>
<div class="ct fl" style="right:50px;top:456px">50.0</div>
<div class="ct fl" style="right:50px;top:499px">38.2</div>
<div class="ct fl" style="right:50px;top:553px">23.6</div>
<div class="ct fl" style="right:50px;top:638px">0.0</div>
<div class="ct" style="left:15px;top:116px;background:#fff;letter-spacing:0.3px;line-height:10px;padding-right:1px">#1373111 buy 0.20</div>
<div class="ct" style="left:22px;top:111px;background:#fff;font-size:9.5px;letter-spacing:0px;padding-right:2px;line-height:11px;padding-top:1px">EURCHF,H4&nbsp;&nbsp;1.21602 1.21628 1.21549 1.21558</div>
<svg class="abs" style="left:12px;top:115px" width="8" height="6"><path d="M0 0.5H7L3.5 4Z" fill="#000"/></svg>
<div class="ct" style="left:14px;top:458px;font-size:9.5px;letter-spacing:0.06px;background:#fff;line-height:12px;padding:0 1px">#1373111 buy 0.20</div>
<div class="abs" style="left:1234px;top:470px;width:40px;height:14px;background:#000"></div>
<div class="ct" style="left:1237px;top:471px;color:#fff">1.21558</div>
<!-- tabs -->
<div class="abs" style="left:4px;top:684px;width:1272px;height:1px;background:#fff"></div>
<div class="abs" style="left:4px;top:685px;width:1272px;height:1px;background:#000"></div>
<div class="abs" style="left:5px;top:686px;width:1px;height:17px;background:#a0a0a0"></div>
<div class="abs" style="left:4px;top:705px;width:1272px;height:1px;background:#fff"></div>
<div class="tab" style="left:18px">EURUSD,H1</div>
<div class="tsep" style="left:88px"></div>
<div class="tab" style="left:99px">GBPUSD,H1</div>
<div class="tsep" style="left:168px"></div>
<div class="tab" style="left:178px">EURJPY,H1</div>
<div class="tsep" style="left:244px"></div>
<div class="tab" style="left:255px">AUDNZD,Daily</div>
<div class="tsep" style="left:336px"></div>
<div class="tab" style="left:345px">NZDUSD,Daily</div>
<div class="tsep" style="left:424px"></div>
<div class="tab" style="left:434px">GBPJPY,H4</div>
<div class="tsep" style="left:500px"></div>
<div class="tab" style="left:510px">USDCAD,H1</div>
<div class="tsep" style="left:580px"></div>
<div class="tab" style="left:590px">GBPCHF,Daily</div>
<div class="tsep" style="left:668px"></div>
<div class="tab" style="left:677px">XAUUSD,Daily</div>
<div class="tsep" style="left:756px"></div>
<div class="tab" style="left:766px">EURGBP,Daily</div>
<div class="tsep" style="left:844px"></div>
<div class="tab" style="left:854px">USDJPY,H4</div>
<div class="tsep" style="left:920px"></div>
<div class="tab" style="left:930px">AUDUSD,H4</div>
<div class="abs" style="left:1000px;top:685px;width:81px;height:18px;background:#fff;border:1px solid #000;border-top:none"></div>
<div class="tab" style="left:1010px;color:#000">EURCHF,H4</div>
<svg class="abs" style="left:1240px;top:688px" width="34" height="14"><path d="M8 7.5L12 3.5V11.5Z" fill="#a8a8a8"/><path d="M25 3.5L29 7.5L25 11.5Z" fill="#a8a8a8"/></svg>
<!-- status bar -->
<div class="st" style="left:5px">Для справки, нажмите F1</div>
<div class="ss" style="left:555px"></div>
<div class="st" style="left:560px">Default</div>
<div class="ss" style="left:664px"></div>
<div class="st" style="left:669px">2014.03.11 04:00</div>
<div class="ss" style="left:765px"></div>
<div class="st" style="left:770px">O: 1.21876</div>
<div class="ss" style="left:837px"></div>
<div class="st" style="left:842px">H: 1.21890</div>
<div class="ss" style="left:908px"></div>
<div class="st" style="left:913px">L: 1.21815</div>
<div class="ss" style="left:977px"></div>
<div class="st" style="left:982px">C: 1.21839</div>
<div class="ss" style="left:1048px"></div>
<div class="st" style="left:1053px">V: 4081</div>
<div class="ss" style="left:1114px"></div>
<div class="abs" style="left:1120px;top:711px;width:2px;height:8px;background:#4a7a00"></div>
<div class="abs" style="left:1120px;top:720px;width:2px;height:3px;background:#a00000"></div>
<div class="abs" style="left:1123px;top:711px;width:2px;height:7px;background:#4a7a00"></div>
<div class="abs" style="left:1123px;top:719px;width:2px;height:4px;background:#a00000"></div>
<div class="abs" style="left:1126px;top:711px;width:2px;height:6px;background:#4a7a00"></div>
<div class="abs" style="left:1126px;top:718px;width:2px;height:5px;background:#a00000"></div>
<div class="abs" style="left:1129px;top:711px;width:2px;height:5px;background:#4a7a00"></div>
<div class="abs" style="left:1129px;top:717px;width:2px;height:6px;background:#a00000"></div>
<div class="abs" style="left:1132px;top:711px;width:2px;height:4px;background:#4a7a00"></div>
<div class="abs" style="left:1132px;top:716px;width:2px;height:7px;background:#a00000"></div>
<div class="abs" style="left:1135px;top:711px;width:2px;height:3px;background:#4a7a00"></div>
<div class="abs" style="left:1135px;top:715px;width:2px;height:8px;background:#a00000"></div>
<div class="abs" style="left:1138px;top:711px;width:2px;height:2px;background:#4a7a00"></div>
<div class="abs" style="left:1138px;top:714px;width:2px;height:9px;background:#a00000"></div>
<div class="abs" style="left:1141px;top:711px;width:2px;height:1px;background:#4a7a00"></div>
<div class="abs" style="left:1141px;top:713px;width:2px;height:10px;background:#a00000"></div>
<div class="st" style="left:1169px">441/0 kb</div>
<svg class="abs" style="left:1254px;top:711px" width="22" height="15"><path d="M21 1L8 14M21 5L12 14M21 9L16 14" stroke="#fff" stroke-width="1.5"/><path d="M21 3L10 14M21 7L14 14M21 11L18 14" stroke="#a0a0a0" stroke-width="1"/></svg>
</body></html>
